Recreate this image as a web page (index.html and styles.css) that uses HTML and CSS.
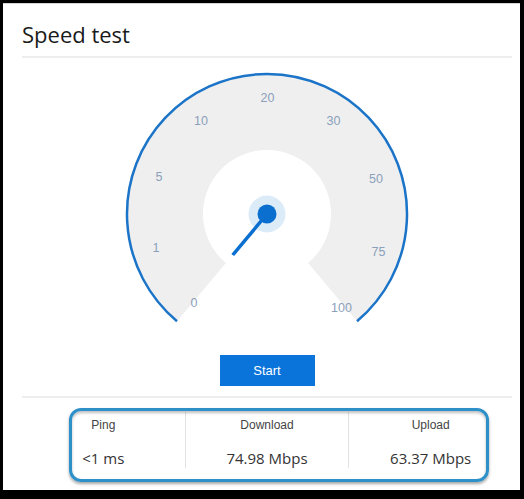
FILE: index.html
```html
<!DOCTYPE html>
<html lang="en">
<head>
    <meta charset="UTF-8">
    <meta name="viewport" content="width=device-width, initial-scale=1.0">
    <title>Speed test</title>
    <link rel="stylesheet" href="styles.css">
</head>
<body>
    <div class="frame">
        <div class="header">
            <h1>Speed test</h1>
        </div>

        <!-- gauge, drawn in page coordinates -->
        <svg class="gauge" width="490" height="282" viewBox="22 58 490 282">
            <path class="gauge-band" d="M 225.9 263 L 177 321.2 A 140 140 0 1 1 357 321.2 L 308.1 263 A 64 64 0 1 0 225.9 263 Z"/>
            <path class="gauge-rim" d="M 177 321.2 A 140 140 0 1 1 357 321.2"/>
            <g class="gauge-labels">
                <text x="194" y="307">0</text>
                <text x="156" y="252">1</text>
                <text x="159" y="181">5</text>
                <text x="201" y="125">10</text>
                <text x="267.5" y="102">20</text>
                <text x="333.5" y="125">30</text>
                <text x="376" y="183">50</text>
                <text x="378.5" y="256">75</text>
                <text x="341.5" y="312">100</text>
            </g>
            <circle class="hub-halo" cx="267" cy="214" r="18.5"/>
            <line class="needle" x1="267" y1="214" x2="232.7" y2="255"/>
            <circle class="hub" cx="267" cy="214" r="9.5"/>
        </svg>

        <div class="actions">
            <button class="start-btn">Start</button>
        </div>

        <div class="stats">
            <div class="stat">
                <div class="stat-label">Ping</div>
                <div class="stat-value">&lt;1 ms</div>
            </div>
            <div class="stat">
                <div class="stat-label">Download</div>
                <div class="stat-value">74.98 Mbps</div>
            </div>
            <div class="stat">
                <div class="stat-label">Upload</div>
                <div class="stat-value">63.37 Mbps</div>
            </div>
            <div class="callout"></div>
        </div>
    </div>
</body>
</html>
```

FILE: styles.css
```css
* {
    box-sizing: border-box;
}
body {
    margin: 0;
    background-color: #000;
    font-family: "Open Sans", "Noto Sans", sans-serif;
    color: #222;
}
.frame {
    margin: 3px 4px 9px 3px;
    height: 487px;
    background-color: #fff;
    border-top: 1px solid #d4d4d4;
    padding: 0 8px 0 19px;
}
.header {
    padding-top: 15px;
    padding-bottom: 7px;
    border-bottom: 2px solid #eeeeee;
}
h1 {
    margin: 0;
    font-size: 22px;
    line-height: 30px;
    font-weight: 400;
    color: #1a1a1a;
}
.gauge {
    display: block;
}
.gauge-band {
    fill: #efefef;
}
.gauge-rim {
    fill: none;
    stroke: #1b74c8;
    stroke-width: 2.5;
}
.gauge-labels text {
    font-family: "Liberation Sans", Arial, sans-serif;
    font-size: 12.5px;
    fill: #8aa0bb;
    text-anchor: middle;
}
.hub-halo {
    fill: #dcebf8;
}
.hub {
    fill: #0a6fcf;
}
.needle {
    stroke: #0a6fcf;
    stroke-width: 3.5;
}
.actions {
    display: flex;
    justify-content: center;
    padding-top: 15px;
    padding-bottom: 10px;
    border-bottom: 2px solid #eeeeee;
}
.start-btn {
    width: 95px;
    height: 31px;
    border: none;
    background-color: #0a74da;
    color: #fff;
    font-family: "Liberation Sans", Arial, sans-serif;
    font-size: 13px;
}
.stats {
    position: relative;
    display: flex;
    padding-top: 14px;
}
.stat {
    flex: 1;
    text-align: center;
    padding-top: 5px;
    border-left: 1px solid #e2e2e2;
}
.stat:first-child {
    border-left: none;
}
.stat-label {
    font-family: "Liberation Sans", Arial, sans-serif;
    font-size: 12px;
    line-height: 16px;
    color: #444;
}
.stat-value {
    margin-top: 15px;
    font-size: 15px;
    line-height: 20px;
    color: #333;
}
.callout {
    position: absolute;
    left: 47px;
    top: 10px;
    width: 420px;
    height: 74px;
    border: 3px solid #2e90c9;
    border-radius: 12px;
    box-shadow: 0 2px 3px rgba(0, 0, 0, 0.35), inset 0 2px 3px rgba(0, 0, 0, 0.25);
}
```
